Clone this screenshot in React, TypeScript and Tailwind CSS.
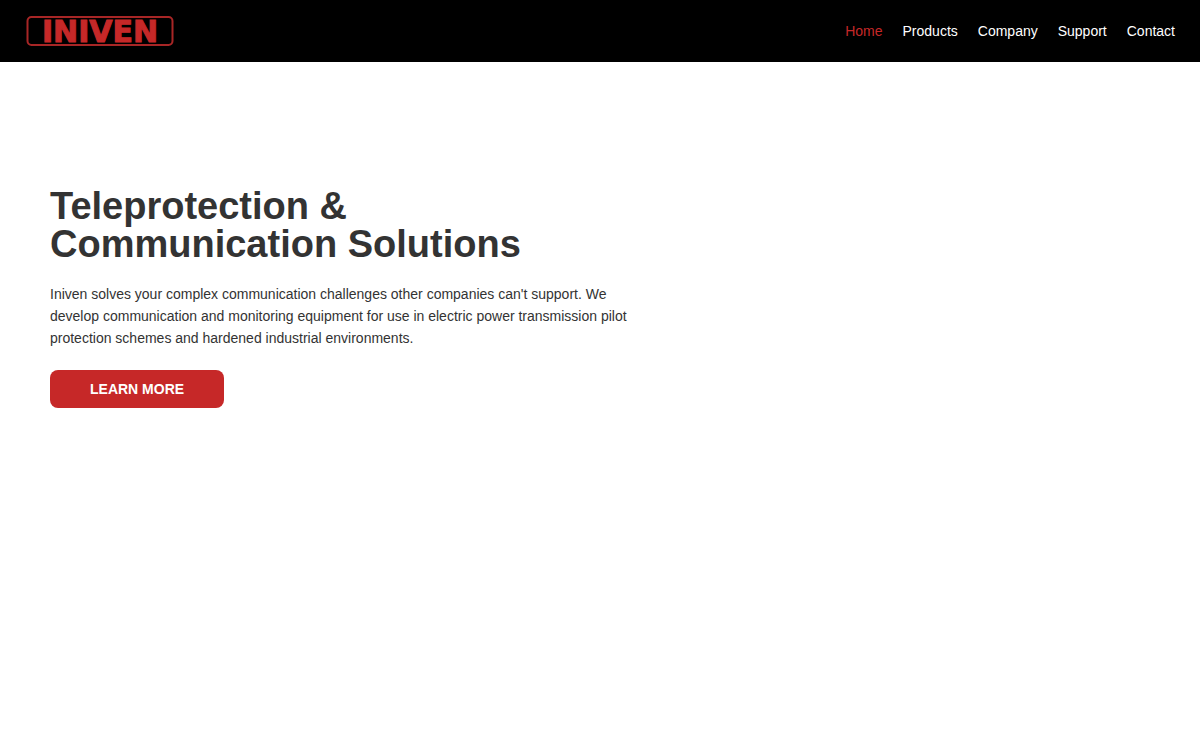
interface NavItem {
  label: string;
  href: string;
  active?: boolean;
}

const navItems: NavItem[] = [
  { label: "Home", href: "#home", active: true },
  { label: "Products", href: "#products" },
  { label: "Company", href: "#company" },
  { label: "Support", href: "#support" },
  { label: "Contact", href: "#contact" },
];

const Logo = () => (
  <svg
    width="150"
    height="32"
    viewBox="0 0 150 32"
    role="img"
    aria-label="Iniven"
    className="block overflow-visible"
  >
    <rect x="2.5" y="2" width="145" height="28" rx="4" fill="none" stroke="#a82626" strokeWidth="2" />
    <text
      x="75"
      y="27"
      textAnchor="middle"
      fill="#c62828"
      stroke="#c62828"
      strokeWidth="1"
      className="font-['DejaVu_Sans',sans-serif] text-[30px] font-bold"
    >
      INIVEN
    </text>
  </svg>
);

const Header = () => {
  return (
    <header className="flex items-center justify-between bg-black px-[25px] py-[15px]">
      <a href="#home">
        <Logo />
      </a>

      <nav className="flex gap-5">
        {navItems.map((item) => (
          <a
            key={item.label}
            href={item.href}
            className={item.active ? "text-[#c62828]" : "text-white hover:text-[#c62828]"}
          >
            {item.label}
          </a>
        ))}
      </nav>
    </header>
  );
};

const Hero = () => {
  return (
    <section className="ml-[50px] w-1/2 pt-[125px]">
      <h1 className="text-[38px] leading-[38px] font-bold">
        Teleprotection &amp;
        <br />
        Communication Solutions
      </h1>

      <p className="mt-5">
        Iniven solves your complex communication challenges other companies can't support. We develop
        communication and monitoring equipment for use in electric power transmission pilot protection
        schemes and hardened industrial environments.
      </p>

      <a
        href="#products"
        className="mt-[21px] inline-block rounded-lg bg-[#c62828] px-10 py-2 font-bold text-white uppercase"
      >
        Learn more
      </a>
    </section>
  );
};

const App = () => {
  return (
    <div className="min-h-screen bg-white font-['Liberation_Sans',Arial,sans-serif] text-[14px] leading-[22px] text-[#333]">
      <Header />
      <main>
        <Hero />
      </main>
    </div>
  );
};

export default App;
